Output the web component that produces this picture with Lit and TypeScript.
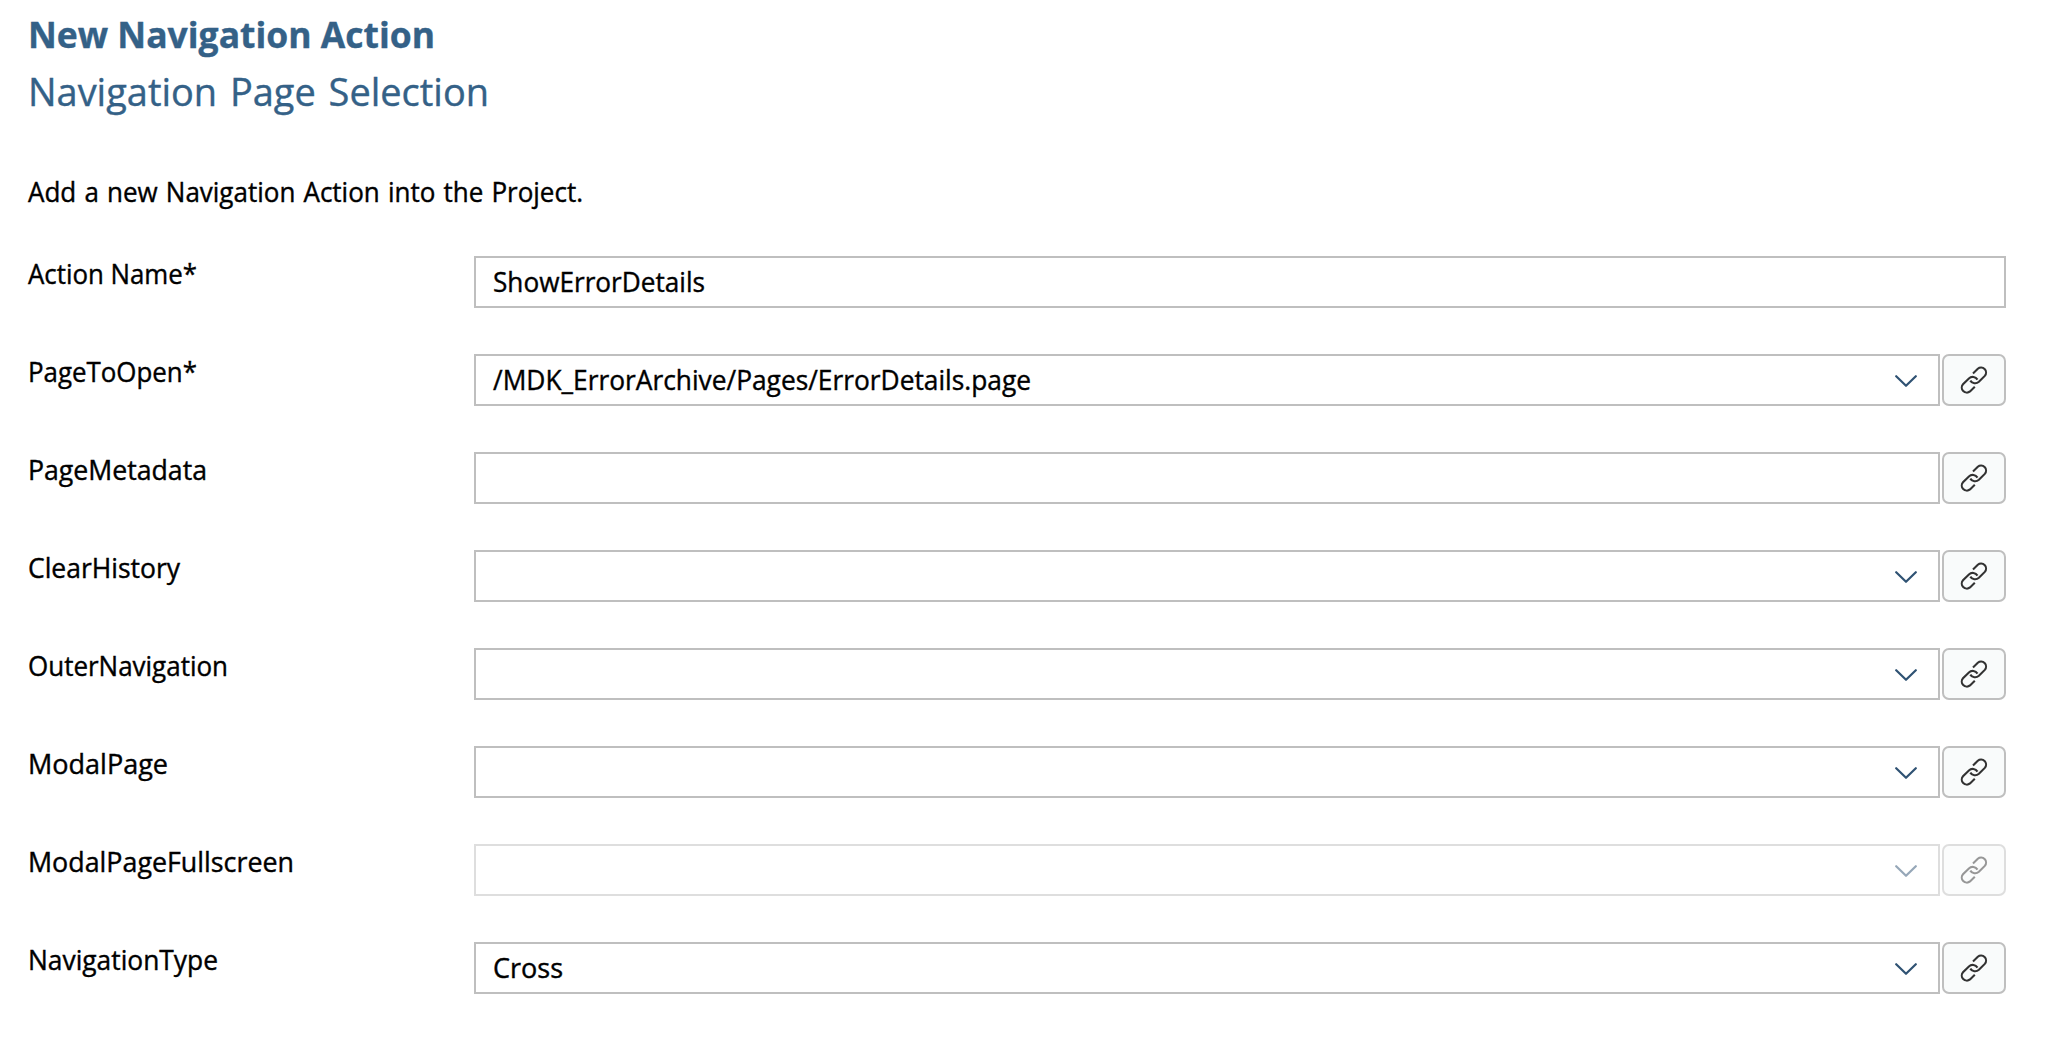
import { LitElement, html, css, svg, nothing } from "lit";
import { customElement, property } from "lit/decorators.js";

interface Field {
  label: string;
  labelWidth: number;
  value?: string;
  valueWidth?: number;
  select?: boolean;
  link?: boolean;
  disabled?: boolean;
}

const FIELDS: Field[] = [
  { label: "Action Name*", labelWidth: 169, value: "ShowErrorDetails", valueWidth: 212 },
  { label: "PageToOpen*", labelWidth: 169, value: "/MDK_ErrorArchive/Pages/ErrorDetails.page", valueWidth: 538, select: true, link: true },
  { label: "PageMetadata", labelWidth: 179, link: true },
  { label: "ClearHistory", labelWidth: 152, select: true, link: true },
  { label: "OuterNavigation", labelWidth: 200, select: true, link: true },
  { label: "ModalPage", labelWidth: 140, select: true, link: true },
  { label: "ModalPageFullscreen", labelWidth: 266, select: true, link: true, disabled: true },
  { label: "NavigationType", labelWidth: 190, value: "Cross", valueWidth: 70, select: true, link: true },
];

/** A single line of text condensed or expanded to a given advance width. */
@customElement("fit-text")
export class FitText extends LitElement {
  @property() text = "";
  @property({ type: Number }) width = 0;

  static styles = css`
    :host { display: block; white-space: nowrap; }
    .line { display: inline-block; transform-origin: 0 50%; }
  `;

  updated() {
    const line = this.renderRoot.querySelector<HTMLElement>(".line");
    if (!line || !this.width) return;
    line.style.transform = "none";
    const natural = line.getBoundingClientRect().width;
    if (natural) line.style.transform = `scaleX(${this.width / natural})`;
  }

  render() {
    return html`<span class="line">${this.text}</span>`;
  }
}

const chevron = svg`<path d="M1.2 1.2 L11 10.8 L20.8 1.2" />`;
const chain = svg`
  <path d="M13 7.4 L17.8 2.8 A5 5 0 0 1 24.8 9.9 L18.9 15.8 A5.6 5.6 0 0 1 10.3 14.6" />
  <path d="M14.8 20.8 L10 25.4 A5 5 0 0 1 3 18.3 L8.9 12.4 A5.6 5.6 0 0 1 17.5 13.6" />
`;

@customElement("app-root")
export class AppRoot extends LitElement {
  static styles = css`
    :host {
      display: block;
      box-sizing: border-box;
      height: 1040px;
      padding: 11px 52px 0 28px;
      background: #fff;
      color: #000;
      font-family: "Open Sans", "Noto Sans", sans-serif;
      font-size: 27.5px;
      -webkit-text-stroke: 0.4px currentColor;
      overflow: hidden;
    }
    .title, .subtitle, .intro { margin: 0; font-weight: 400; }
    .title { font-size: 36.4px; font-weight: 700; line-height: 46px; color: #346187; }
    .subtitle { margin-top: 6px; font-size: 38.5px; line-height: 56px; color: #346187; word-spacing: 3px; }
    .intro { margin-top: 53px; line-height: 39px; word-spacing: 1.5px; }
    .form { display: flex; flex-direction: column; gap: 46px; margin-top: 45px; }
    .row { display: grid; grid-template-columns: 446px 1fr; height: 52px; }
    .label { line-height: 35px; }
    .controls { display: flex; gap: 2px; }
    .input {
      box-sizing: border-box;
      flex: 1;
      display: flex;
      align-items: center;
      justify-content: space-between;
      height: 52px;
      padding: 0 21px 0 17px;
      border: 2px solid #bfbfbf;
      background: #fff;
      line-height: 45px;
    }
    .value { padding-bottom: 1px; }
    .arrow { margin: 2px 0 0 auto; width: 22px; height: 12px; fill: none; stroke: #2f5273; stroke-width: 2.2; stroke-linecap: round; stroke-linejoin: round; }
    .link {
      box-sizing: border-box;
      display: flex;
      align-items: center;
      justify-content: center;
      width: 64px;
      height: 52px;
      padding: 0;
      border: 2px solid #bfbfbf;
      border-radius: 7px;
      background: #f9fbfb;
    }
    .chain { width: 28px; height: 28px; fill: none; stroke: #323232; stroke-width: 2.1; stroke-linecap: butt; }
    .disabled { opacity: 0.5; }
  `;

  private renderField(f: Field) {
    return html`
      <div class="row">
        <fit-text class="label" .text=${f.label} .width=${f.labelWidth}></fit-text>
        <div class="controls ${f.disabled ? "disabled" : ""}">
          <div class="input">
            ${f.value ? html`<fit-text class="value" .text=${f.value} .width=${f.valueWidth ?? 0}></fit-text>` : nothing}
            ${f.select ? html`<svg class="arrow" viewBox="0 0 22 12">${chevron}</svg>` : nothing}
          </div>
          ${f.link
            ? html`<button class="link" ?disabled=${f.disabled}><svg class="chain" viewBox="0 0 28 28">${chain}</svg></button>`
            : nothing}
        </div>
      </div>
    `;
  }

  render() {
    return html`
      <h1 class="title"><fit-text .text=${"New Navigation Action"} .width=${407}></fit-text></h1>
      <h2 class="subtitle"><fit-text .text=${"Navigation Page Selection"} .width=${461}></fit-text></h2>
      <p class="intro"><fit-text .text=${"Add a new Navigation Action into the Project."} .width=${555}></fit-text></p>
      <div class="form">${FIELDS.map((f) => this.renderField(f))}</div>
    `;
  }
}
